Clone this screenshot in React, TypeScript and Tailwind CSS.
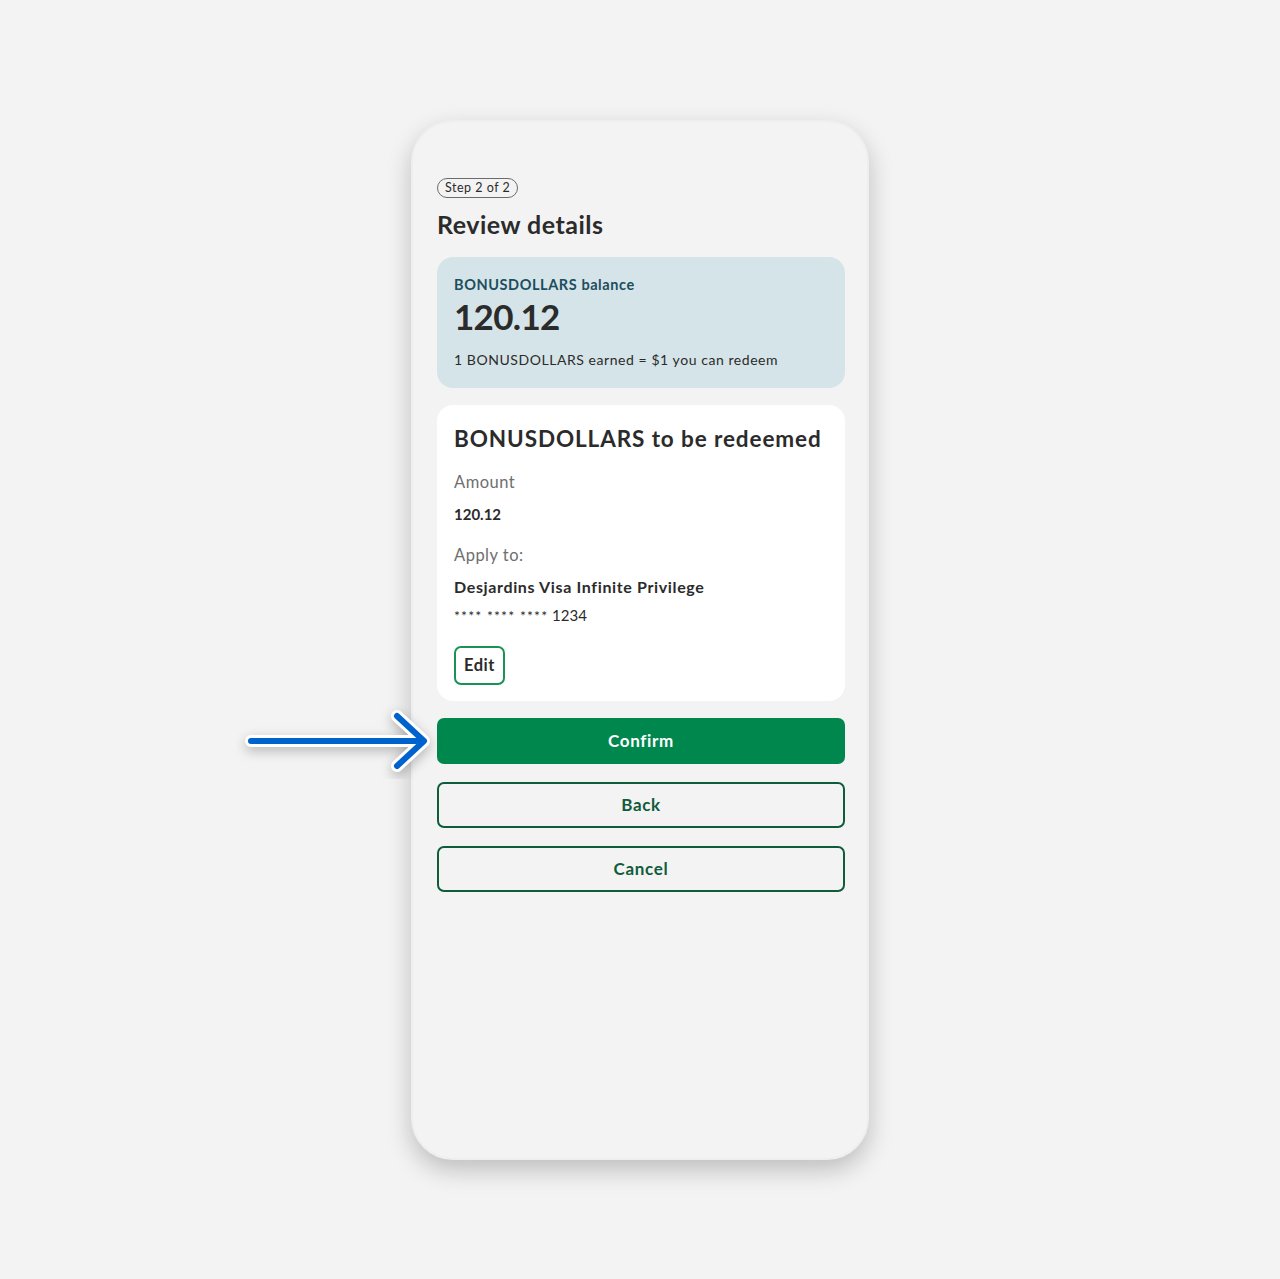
const ArrowPointer = () => (
  <svg
    className="absolute left-[236px] top-[703px]"
    width="206"
    height="76"
    viewBox="0 0 206 76"
    fill="none"
  >
    <g filter="drop-shadow(0 4px 6px rgba(0,0,0,0.25))">
      <path
        d="M15 38 H186 M161 13 L188 38 L161 63"
        stroke="#ffffff"
        strokeWidth="12"
        strokeLinecap="round"
        strokeLinejoin="round"
      />
    </g>
    <path
      d="M15 38 H186 M161 13 L188 38 L161 63"
      stroke="#0062cc"
      strokeWidth="6"
      strokeLinecap="round"
      strokeLinejoin="round"
    />
  </svg>
);

const App = () => {
  return (
    <div className="relative min-h-[1279px] w-full bg-[#f3f3f3] font-['Lato','Noto_Sans',sans-serif] text-[#2b2b2b]">
      <div className="flex justify-center pt-[120px]">
        <div className="h-[1040px] w-[458px] rounded-[42px] border-2 border-[#eceef0] bg-[#f3f3f3] pt-[52px] pl-[24px] pr-[22px] shadow-[0_10px_24px_rgba(0,0,0,0.22)]">
          <span className="inline-block rounded-full border border-[#6b6b6b] px-[7px] text-[12.5px] leading-[18px] tracking-[0.04em] text-[#2b2b2b]">
            Step 2 of 2
          </span>
          <h1 className="mt-[10px] text-[25px] font-bold leading-[32px] tracking-[0.02em] text-[#2b2b2b]">
            Review details
          </h1>

          <section className="mt-[17px] rounded-[16px] bg-[#d5e4e8] px-[17px] pt-[19px] pb-[19px]">
            <p className="text-[14.5px] font-bold leading-[18px] tracking-[0.04em] text-[#1d4e5f]">
              BONUSDOLLARS balance
            </p>
            <p className="text-[35px] font-bold leading-[44px] tracking-[-0.02em] text-[#2b2b2b]">
              120.12
            </p>
            <p className="mt-[13px] text-[14px] leading-[18px] tracking-[0.04em] text-[#2b2b2b]">
              1 BONUSDOLLARS earned = $1 you can redeem
            </p>
          </section>

          <section className="mt-[17px] rounded-[16px] bg-white px-[17px] pt-[20px] pb-[16px]">
            <h2 className="text-[22.5px] font-bold leading-[28px] tracking-[0.04em] text-[#2b2b2b]">
              BONUSDOLLARS to be redeemed
            </h2>
            <p className="mt-[18px] text-[16.5px] leading-[22px] tracking-[0.03em] text-[#6e6e6e]">
              Amount
            </p>
            <p className="mt-[11px] text-[15px] font-bold leading-[20px]">
              120.12
            </p>
            <p className="mt-[20px] text-[16.5px] leading-[22px] tracking-[0.03em] text-[#6e6e6e]">
              Apply to:
            </p>
            <p className="mt-[10px] text-[16px] font-bold leading-[22px] tracking-[0.04em]">
              Desjardins Visa Infinite Privilege
            </p>
            <p className="mt-[7px] text-[15px] leading-[20px]">
              <span className="text-[14px] tracking-[0.08em]">**** **** ****</span> 1234
            </p>
            <button className="mt-[20px] h-[39px] rounded-[7px] border-2 border-[#1a9255] px-[8px] text-[16.5px] font-bold tracking-[0.03em] text-[#2b2b2b]">
              Edit
            </button>
          </section>

          <div className="mt-[17px] flex flex-col gap-[18px]">
            <button className="h-[46px] w-full rounded-[7px] bg-[#00874e] text-[17px] font-bold tracking-[0.04em] text-white">
              Confirm
            </button>
            <button className="h-[46px] w-full rounded-[7px] border-2 border-[#0f5c3b] text-[17px] font-bold tracking-[0.04em] text-[#0f5c3b]">
              Back
            </button>
            <button className="h-[46px] w-full rounded-[7px] border-2 border-[#0f5c3b] text-[17px] font-bold tracking-[0.04em] text-[#0f5c3b]">
              Cancel
            </button>
          </div>
        </div>
      </div>
      <ArrowPointer />
    </div>
  );
};

export default App;
